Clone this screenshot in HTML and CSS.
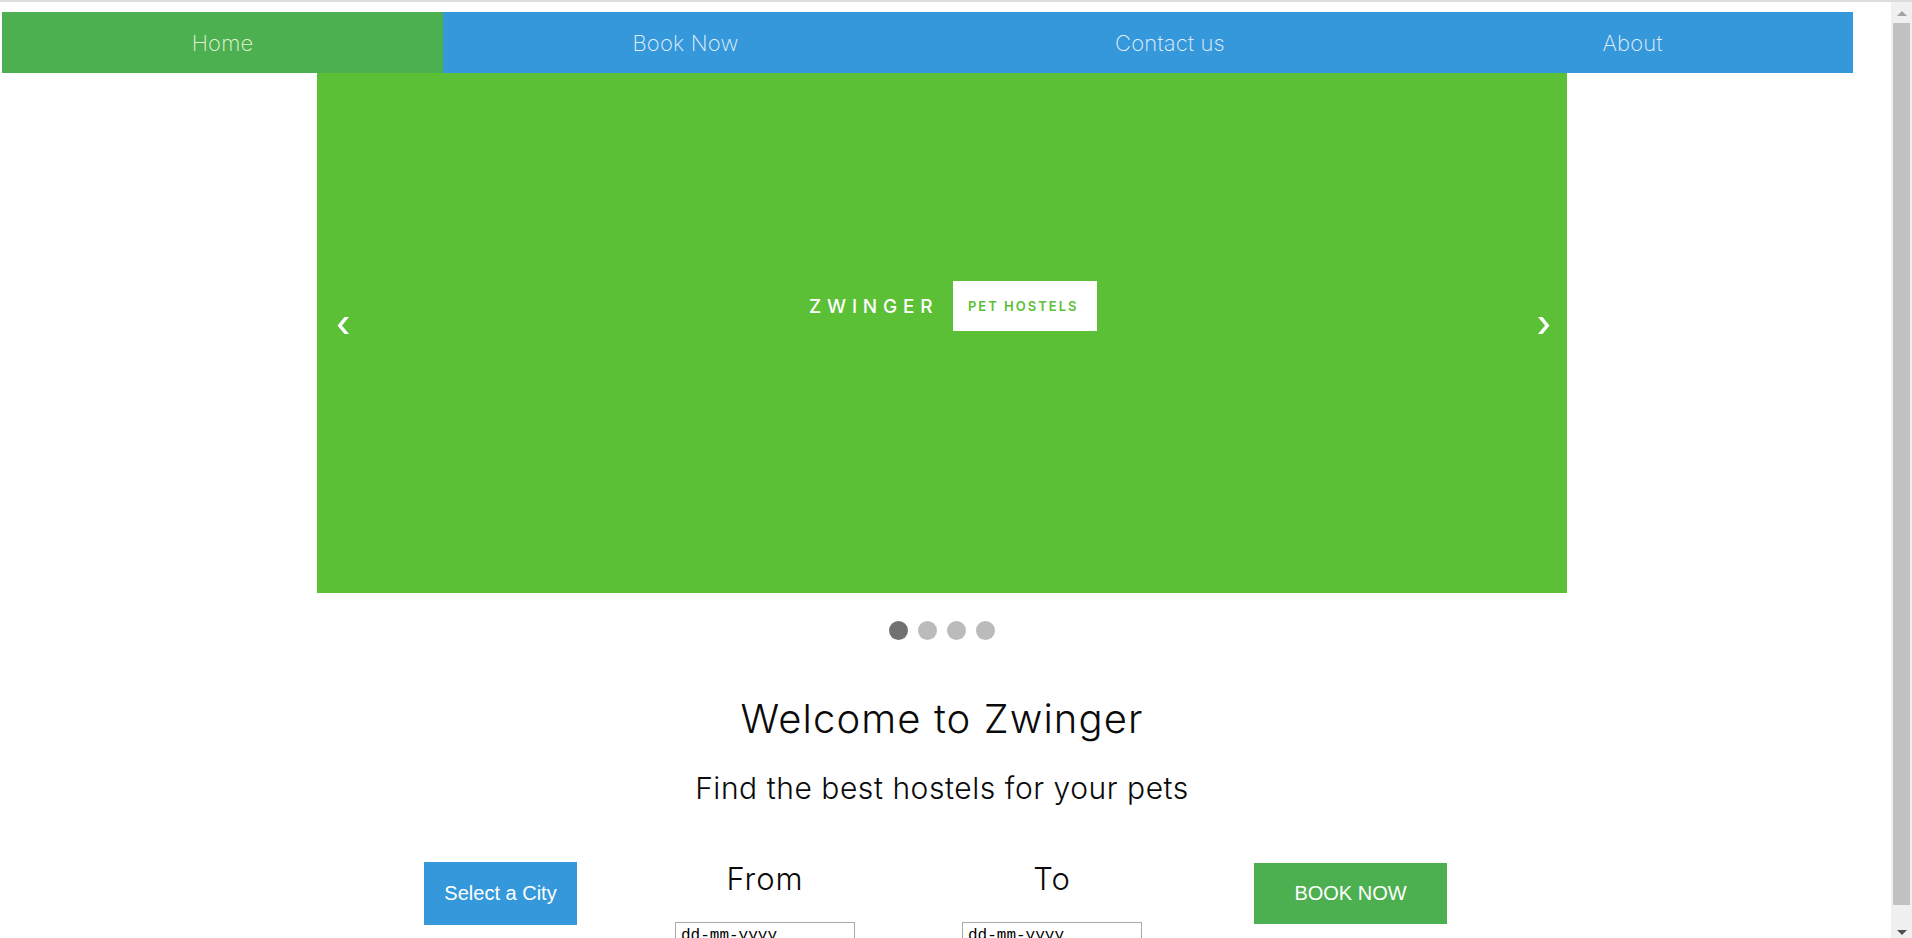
FILE: index.html
```html
<!DOCTYPE html>
<html lang="en">
<head>
<meta charset="utf-8">
<title>Zwinger - Pet Hostels</title>
<link rel="stylesheet" href="styles.css">
</head>
<body>
<div class="topline"></div>
<div class="frame">
  <div class="viewport">
    <nav class="nav">
      <a class="nav-item nav-home active" href="#">Home</a>
      <a class="nav-item" href="#">Book Now</a>
      <a class="nav-item" href="#">Contact us</a>
      <a class="nav-item" href="#">About</a>
    </nav>
    <main class="main">
      <div class="carousel">
        <div class="slide">
          <span class="brand">ZWINGER</span>
          <span class="tag">PET HOSTELS</span>
        </div>
        <a class="arrow prev" href="#" aria-label="Previous">
          <svg width="12" height="17" viewBox="0 0 12 17"><polygon points="7.5,0 12,0 5,8.5 12,17 7.5,17 0.5,8.5" fill="#fff"/></svg>
        </a>
        <a class="arrow next" href="#" aria-label="Next">
          <svg width="12" height="17" viewBox="0 0 12 17"><polygon points="0,0 4.5,0 11.5,8.5 4.5,17 0,17 7,8.5" fill="#fff"/></svg>
        </a>
      </div>
      <div class="dots">
        <span class="dot active"></span>
        <span class="dot"></span>
        <span class="dot"></span>
        <span class="dot"></span>
      </div>
      <h1 class="title">Welcome to Zwinger</h1>
      <h2 class="subtitle">Find the best hostels for your pets</h2>
      <div class="booking">
        <div class="cell cell-city"><button class="btn btn-city">Select a City</button></div>
        <div class="cell cell-from">
          <div class="label">From</div>
          <input class="date" type="text" value="dd-mm-yyyy" readonly>
        </div>
        <div class="cell cell-to">
          <div class="label">To</div>
          <input class="date" type="text" value="dd-mm-yyyy" readonly>
        </div>
        <div class="cell cell-book"><button class="btn btn-book">BOOK NOW</button></div>
      </div>
    </main>
  </div>
  <div class="scrollbar" aria-hidden="true">
    <div class="sb-btn"><span class="sb-up"></span></div>
    <div class="sb-thumb"></div>
    <div class="sb-track"></div>
    <div class="sb-btn sb-btn-down"><span class="sb-down"></span></div>
  </div>
</div>
</body>
</html>
```
FILE: styles.css
```css
html, body {
  margin: 0;
  padding: 0;
  height: 100%;
  overflow: hidden;
  background: #fff;
}

body {
  display: flex;
  flex-direction: column;
  font-family: Inter, "Open Sans", sans-serif;
  color: #111;
}

.topline {
  height: 2px;
  flex: none;
  background: #dadce0;
}

.frame {
  flex: 1;
  display: flex;
  min-height: 0;
}

.viewport {
  flex: 1;
  min-width: 0;
  overflow: hidden;
}

/* Browser scrollbar */
.scrollbar {
  width: 21px;
  flex: none;
  display: flex;
  flex-direction: column;
  background: #f0f0f0;
}
.sb-btn {
  height: 21px;
  flex: none;
  display: flex;
  justify-content: center;
  align-items: flex-start;
}
.sb-up {
  margin-top: 9px;
  width: 0;
  height: 0;
  border-left: 5px solid transparent;
  border-right: 5px solid transparent;
  border-bottom: 5px solid #a3a3a3;
}
.sb-down {
  margin-top: 13px;
  width: 0;
  height: 0;
  border-left: 5px solid transparent;
  border-right: 5px solid transparent;
  border-top: 5px solid #505050;
}
.sb-thumb {
  height: 882px;
  flex: none;
  margin: 0 2px;
  background: #c1c1c1;
}
.sb-track {
  flex: 1;
}

/* Navigation */
.nav {
  display: grid;
  grid-template-columns: 441px 485px 484px 441px;
  height: 61px;
  margin: 10px 0 0 2px;
  width: 1851px;
  background: #3498db;
}
.nav-item {
  display: flex;
  align-items: center;
  justify-content: center;
  font-family: Inter, sans-serif;
  font-weight: 200;
  font-size: 22px;
  letter-spacing: 0.2px;
  color: #e3effa;
  text-decoration: none;
}
.nav-item.active {
  background: #4caf50;
  color: #e6f5d6;
}

/* Main */
.main {
  width: 1250px;
  margin-left: 317px;
}

.carousel {
  position: relative;
  height: 520px;
  background: #5bc035;
}
.slide {
  height: 100%;
  box-sizing: border-box;
  display: flex;
  align-items: center;
  justify-content: center;
  padding: 0 0 54px 22px;
  gap: 14.5px;
}
.brand {
  font-family: Inter, sans-serif;
  font-weight: 500;
  font-size: 19px;
  letter-spacing: 5.8px;
  color: #fff;
}
.tag {
  display: flex;
  align-items: center;
  box-sizing: border-box;
  width: 144px;
  height: 50px;
  padding-left: 15px;
  background: #fff;
  color: #5bc035;
  font-family: Inter, sans-serif;
  font-weight: 600;
  font-size: 13px;
  letter-spacing: 2px;
}
.arrow {
  position: absolute;
  top: 244px;
  display: block;
  line-height: 0;
}
.arrow.prev { left: 20px; }
.arrow.next { right: 17px; }

.dots {
  display: flex;
  justify-content: center;
  gap: 10px;
  margin-top: 28px;
}
.dot {
  width: 19px;
  height: 19px;
  border-radius: 50%;
  background: #bbb;
}
.dot.active {
  background: #717171;
}

.title {
  margin: 55px 0 0;
  text-align: center;
  font-family: Inter, sans-serif;
  font-weight: 300;
  font-size: 40px;
  letter-spacing: 1.1px;
  line-height: 48px;
  color: #0a0a0a;
}
.subtitle {
  margin: 26px 0 0;
  text-align: center;
  font-family: Inter, sans-serif;
  font-weight: 300;
  font-size: 30px;
  letter-spacing: 0.55px;
  line-height: 38px;
  color: #0a0a0a;
}

/* Booking row */
.booking {
  display: flex;
  align-items: flex-start;
  margin: 53px 0 0 107px;
}
.cell {
  display: flex;
  flex-direction: column;
  align-items: center;
}
.cell-from { margin-left: 98px; width: 180px; }
.cell-to { margin-left: 107px; width: 180px; }
.cell-book { margin-left: 112px; }

.label {
  font-family: Inter, sans-serif;
  font-weight: 300;
  font-size: 31px;
  letter-spacing: 1px;
  line-height: 38px;
  color: #0a0a0a;
}
.date {
  margin-top: 24px;
  width: 180px;
  height: 27px;
  box-sizing: border-box;
  border: 1px solid #a9a9a9;
  padding: 0 5px;
  font-family: "Liberation Mono", monospace;
  font-size: 16px;
  color: #000;
  background: #fff;
  outline: none;
}

.btn {
  border: none;
  color: #fff;
  font-family: "Liberation Sans", Arial, sans-serif;
  font-size: 20px;
  cursor: pointer;
}
.btn-city {
  width: 153px;
  height: 63px;
  margin-top: 2px;
  background: #3498db;
}
.btn-book {
  width: 193px;
  height: 61px;
  margin-top: 3px;
  background: #4caf50;
}
```
